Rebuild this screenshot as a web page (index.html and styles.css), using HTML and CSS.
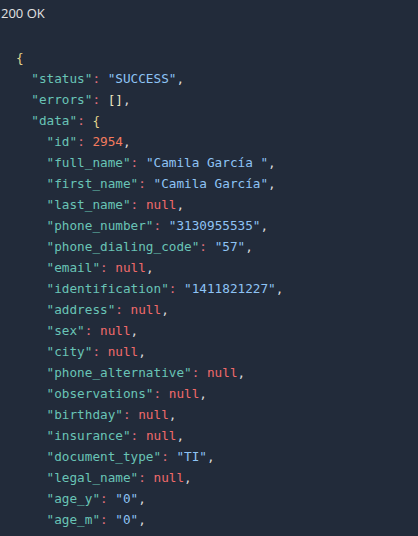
FILE: index.html
```html
<!DOCTYPE html>
<html>
<head>
<meta charset="utf-8">
<link rel="stylesheet" href="styles.css">
</head>
<body>
<div class="status-line">200 OK</div>
<pre class="json"><span class="br">{</span>
  <span class="k">"status"</span><span class="c">:</span> <span class="s">"SUCCESS"</span><span class="p">,</span>
  <span class="k">"errors"</span><span class="c">:</span> <span class="ar">[]</span><span class="p">,</span>
  <span class="k">"data"</span><span class="c">:</span> <span class="br2">{</span>
    <span class="k">"id"</span><span class="c">:</span> <span class="n">2954</span><span class="p">,</span>
    <span class="k">"full_name"</span><span class="c">:</span> <span class="s">"Camila García "</span><span class="p">,</span>
    <span class="k">"first_name"</span><span class="c">:</span> <span class="s">"Camila García"</span><span class="p">,</span>
    <span class="k">"last_name"</span><span class="c">:</span> <span class="nl">null</span><span class="p">,</span>
    <span class="k">"phone_number"</span><span class="c">:</span> <span class="s">"3130955535"</span><span class="p">,</span>
    <span class="k">"phone_dialing_code"</span><span class="c">:</span> <span class="s">"57"</span><span class="p">,</span>
    <span class="k">"email"</span><span class="c">:</span> <span class="nl">null</span><span class="p">,</span>
    <span class="k">"identification"</span><span class="c">:</span> <span class="s">"1411821227"</span><span class="p">,</span>
    <span class="k">"address"</span><span class="c">:</span> <span class="nl">null</span><span class="p">,</span>
    <span class="k">"sex"</span><span class="c">:</span> <span class="nl">null</span><span class="p">,</span>
    <span class="k">"city"</span><span class="c">:</span> <span class="nl">null</span><span class="p">,</span>
    <span class="k">"phone_alternative"</span><span class="c">:</span> <span class="nl">null</span><span class="p">,</span>
    <span class="k">"observations"</span><span class="c">:</span> <span class="nl">null</span><span class="p">,</span>
    <span class="k">"birthday"</span><span class="c">:</span> <span class="nl">null</span><span class="p">,</span>
    <span class="k">"insurance"</span><span class="c">:</span> <span class="nl">null</span><span class="p">,</span>
    <span class="k">"document_type"</span><span class="c">:</span> <span class="s">"TI"</span><span class="p">,</span>
    <span class="k">"legal_name"</span><span class="c">:</span> <span class="nl">null</span><span class="p">,</span>
    <span class="k">"age_y"</span><span class="c">:</span> <span class="s">"0"</span><span class="p">,</span>
    <span class="k">"age_m"</span><span class="c">:</span> <span class="s">"0"</span><span class="p">,</span></pre>
</body>
</html>
```
FILE: styles.css
```css
html, body {
  margin: 0;
  padding: 0;
  background: #222b3a;
  overflow: hidden;
}
.status-line {
  font-family: "Open Sans", "Noto Sans", sans-serif;
  font-size: 13px;
  color: #e2e2e2;
  padding: 4px 0 0 1px;
  height: 20px;
  line-height: 18px;
}
.json {
  margin: 0;
  padding: 23px 0 0 16px;
  font-family: "DejaVu Sans Mono", monospace;
  font-size: 12.7px;
  line-height: 21px;
  color: #d6d6d6;
}
.k { color: #69c4b6; }
.s { color: #8ec3f5; }
.nl { color: #f06a6a; }
.n { color: #f47b5e; }
.c { color: #e0707a; }
.p { color: #d8d8d8; }
.br { color: #e3d58e; }
.br2 { color: #e3d58e; }
.ar { color: #ece5c0; }
```
